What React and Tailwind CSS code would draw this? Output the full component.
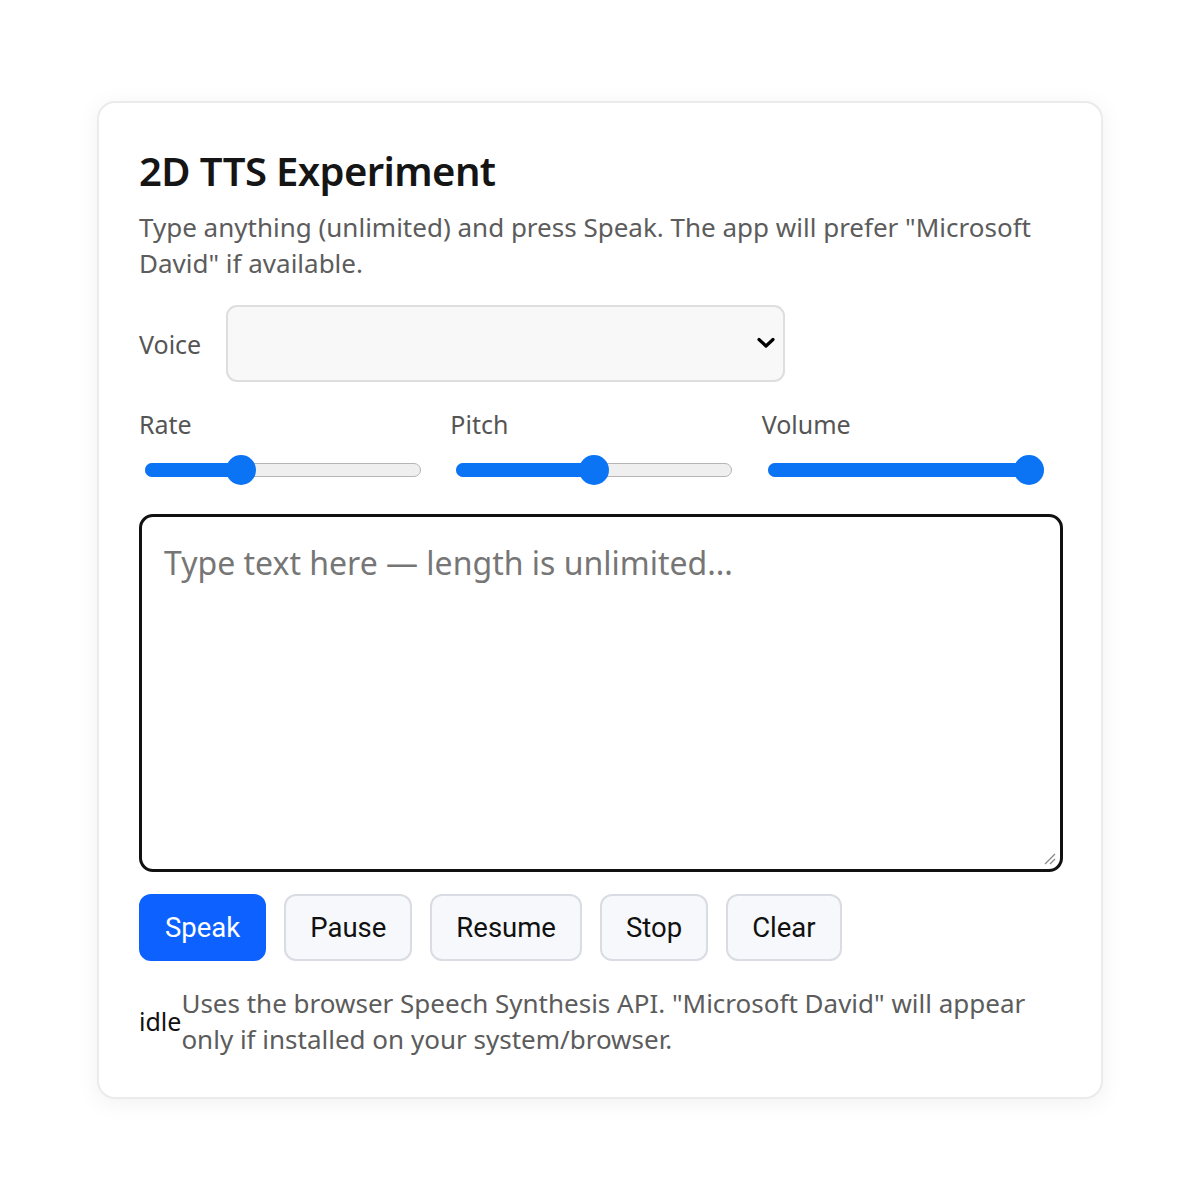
import React from "react";

function Slider({ label, pct }) {
  return (
    <div className="flex flex-col">
      <div className="text-[25px] leading-[34px] text-[#555]">{label}</div>
      <div className="relative mt-[14px] h-[30px] w-[276px] ml-[6px]">
        <div className="absolute left-0 right-0 top-[8px] h-[14px] rounded-full bg-[#efefef] border border-[#b5b5b5]" />
        <div
          className="absolute left-0 top-[8px] h-[14px] rounded-full bg-[#0b74f5]"
          style={{ width: `calc(15px + (100% - 30px) * ${pct})` }}
        />
        <div
          className="absolute top-0 h-[30px] w-[30px] rounded-full bg-[#0b74f5]"
          style={{ left: `calc((100% - 30px) * ${pct})` }}
        />
      </div>
    </div>
  );
}

export default function App() {
  const btn =
    "h-[67px] rounded-[12px] px-[24px] text-[27.5px] font-['Roboto',sans-serif] border-2";
  return (
    <div className="min-h-[1200px] bg-white pt-[101px] px-[97px] font-['Noto_Sans',sans-serif]">
      <div className="w-[1006px] h-[998px] rounded-[18px] border-2 border-[#ebebeb] bg-white shadow-[0_4px_24px_rgba(0,0,0,0.06)] px-[40px] pt-[40px]">
        <h1 className="text-[40px] leading-[56px] font-semibold text-[#151515] tracking-[-0.6px]">
          2D TTS Experiment
        </h1>
        <p className="mt-[10px] text-[26px] leading-[36px] text-[#5c5c5c] w-[924px]">
          Type anything (unlimited) and press Speak. The app will prefer "Microsoft David" if available.
        </p>
        <div className="mt-[24px] flex items-center">
          <span className="text-[25px] text-[#555] w-[87px] relative top-[1px]">Voice</span>
          <div className="relative w-[559px] h-[77px] rounded-[11px] border-2 border-[#dedede] bg-[#f8f8f8]">
            <svg
              className="absolute right-[8px] top-[30px]"
              width="18"
              height="12"
              viewBox="0 0 18 12"
            >
              <path d="M2 2.5 L9 9 L16 2.5" fill="none" stroke="#000" strokeWidth="3.2" strokeLinecap="round" strokeLinejoin="round" />
            </svg>
          </div>
        </div>
        <div className="mt-[25px] grid grid-cols-3 gap-[12px]">
          <Slider label="Rate" pct={0.33} />
          <Slider label="Pitch" pct={0.5} />
          <Slider label="Volume" pct={1} />
        </div>
        <div className="relative mt-[29px] h-[358px] w-[924px] rounded-[14px] border-[3px] border-[#111] bg-white px-[22px] pt-[24px]">
          <div className="text-[32px] leading-[44px] text-[#767676]">
            Type text here — length is unlimited...
          </div>
          <svg className="absolute right-[4px] bottom-[4px]" width="14" height="14" viewBox="0 0 14 14">
            <path d="M13 3 L3 13 M13 8 L8 13" stroke="#888" strokeWidth="1.3" />
          </svg>
        </div>
        <div className="mt-[22px] flex gap-[18px]">
          <button className={`${btn} bg-[#0d62ff] border-[#0d62ff] text-white`}>Speak</button>
          <button className={`${btn} bg-[#f6f8fb] border-[#d9dde3] text-[#111]`}>Pause</button>
          <button className={`${btn} bg-[#f6f8fb] border-[#d9dde3] text-[#111]`}>Resume</button>
          <button className={`${btn} bg-[#f6f8fb] border-[#d9dde3] text-[#111]`}>Stop</button>
          <button className={`${btn} bg-[#f6f8fb] border-[#d9dde3] text-[#111]`}>Clear</button>
        </div>
        <div className="mt-[24px] flex items-center">
          <span className="text-[25px] text-[#111] relative top-[1px]">idle</span>
          <p className="text-[26px] leading-[36px] text-[#5c5c5c] w-[870px]">
            Uses the browser Speech Synthesis API. "Microsoft David" will appear only if installed on your system/browser.
          </p>
        </div>
      </div>
    </div>
  );
}
